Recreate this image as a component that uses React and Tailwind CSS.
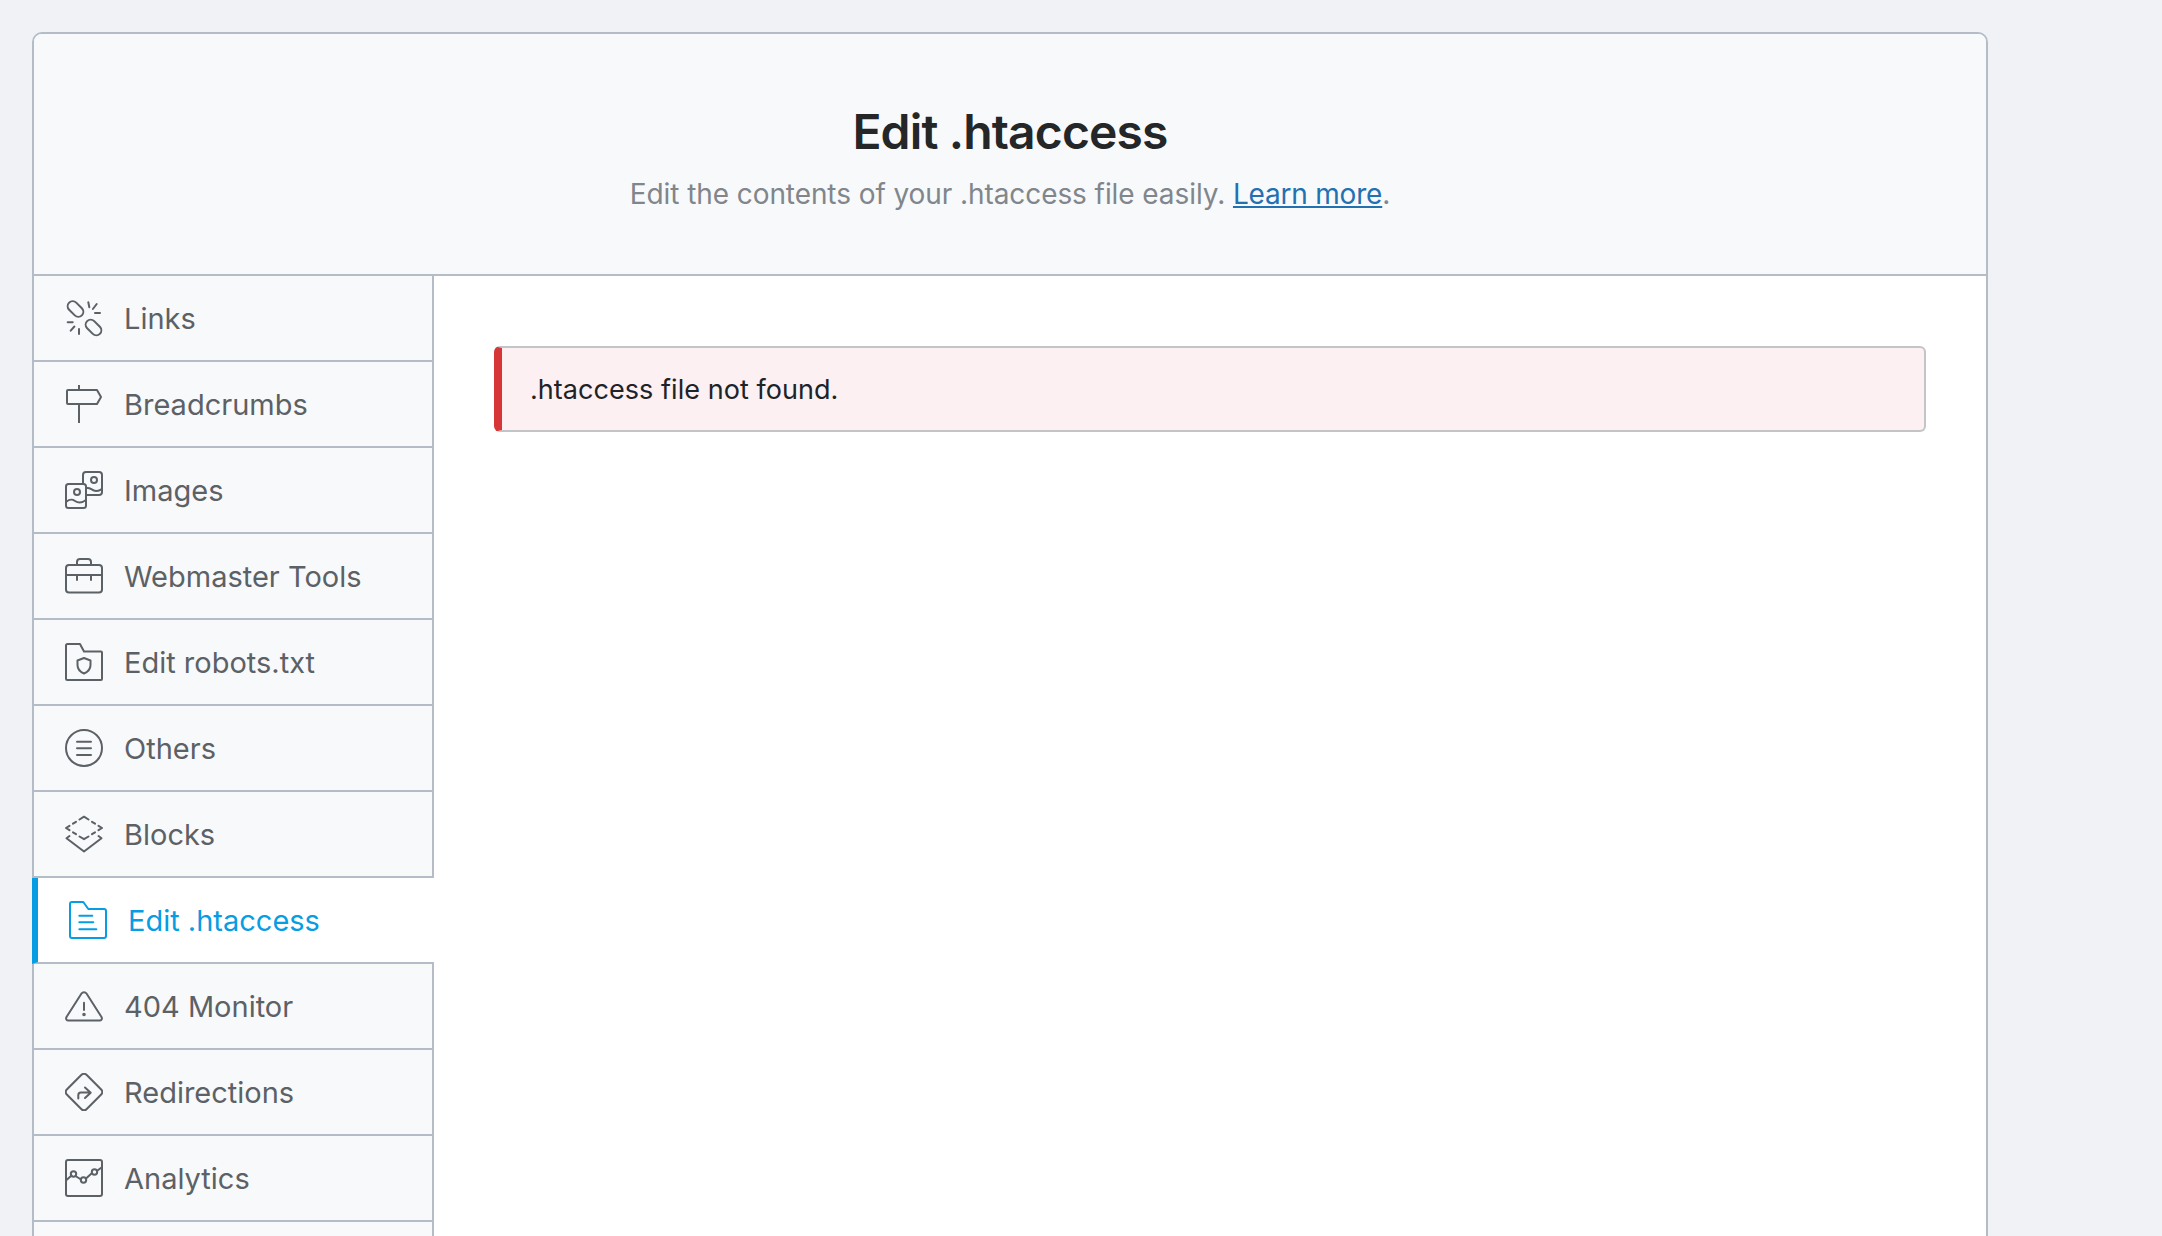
const Links = () => (
    <>
        <rect x="1.500" y="5" width="18" height="10" rx="5" transform="rotate(45 10.5 10)" />
        <rect x="19.500" y="23.500" width="18" height="10" rx="5" transform="rotate(45 28.5 28.5)" />
        <path d="M23.300 3.300l1 5M31.700 5l-3.800 5M35 14h-5" />
        <path d="M2.700 23.300h5M5.700 31.700l3.700-4.200M14 35v-5" />
    </>
);

const Breadcrumbs = () => (
    <>
        <path d="M14 0v5M14 19v19" />
        <path d="M3 5h29l4 7-4 7H3a1 1 0 0 1-1-1V6a1 1 0 0 1 1-1z" />
    </>
);

const Images = () => (
    <>
        <path d="M21 24h13a3 3 0 0 0 3-3V4a3 3 0 0 0-3-3H21a3 3 0 0 0-3 3v8" />
        <circle cx="29" cy="9" r="3" />
        <path d="M22 17c3-1 5 3 9 3 3 0 4-1 6-2" />
        <rect x="1" y="13" width="20" height="24" rx="2.500" />
        <circle cx="12" cy="21" r="3" />
        <path d="M1 31c4-3 6-3 9-1s7 2 11-1" />
    </>
);

const Webmaster = () => (
    <>
        <rect x="1" y="8" width="36" height="27.500" rx="3" />
        <path d="M1 18h36M12 8V5a3 3 0 0 1 3-3h8a3 3 0 0 1 3 3v3M12 18v5M26 18v5" />
    </>
);

const Robots = () => (
    <>
        <path d="M1 2.500a1.500 1.500 0 0 1 1.500-1.500H15l4 7.500h17a1 1 0 0 1 1 1V36a1 1 0 0 1-1 1H2.500A1.500 1.500 0 0 1 1 35.500z" />
        <path d="M19 15l6.500 2.500v4.500c0 4-3 7-6.500 8.500-3.500-1.500-6.500-4.500-6.500-8.500v-4.500z" />
    </>
);

const Others = () => (
    <>
        <circle cx="19" cy="19" r="18" />
        <path d="M12 12.700h14M12 19.300h14M12 26h14" />
    </>
);

const Blocks = () => (
    <>
        <path d="M14.500 4.500L19 1.700l4.500 2.800M27 6.800l3 1.900M33.500 10.800L37 13l-3.500 2.200M30 17.300l-3 1.900M23.500 21.500L19 24.200l-4.500-2.700M11 19.200l-3-1.900M4.500 15.200L1 13l3.500-2.200M8 8.700l3-1.900" />
        <path d="M4.500 21l-3 2.300L19 36.500l17.500-13.200-3-2.300" />
    </>
);

const Htaccess = () => (
    <>
        <path d="M1 3a2 2 0 0 1 2-2h11.300l5 7H35a2 2 0 0 1 2 2v25a2 2 0 0 1-2 2H3a2 2 0 0 1-2-2z" />
        <path d="M10.300 14.700h13M10.300 21.300h14M10.300 28.300h17" />
    </>
);

const Warning = () => (
    <>
        <path d="M16.500 6.500a3 3 0 0 1 5 0l15 23.500c1 1.700 0 3.500-2 3.500H3.500c-2 0-3-1.800-2-3.500z" />
        <path d="M19 15.700v7.300" />
        <circle cx="19" cy="27.500" r="0.800" />
    </>
);

const Redirect = () => (
    <>
        <path d="M16.500 1.800a3.500 3.500 0 0 1 5 0l14.700 14.700a3.500 3.500 0 0 1 0 5L21.500 36.200a3.500 3.500 0 0 1-5 0L1.800 21.500a3.500 3.500 0 0 1 0-5z" />
        <path d="M13.300 25.500V22a2.500 2.500 0 0 1 2.500-2.500H25.500M20 14.500l5.700 5.200-5.700 5.300" />
    </>
);

const Analytics = () => (
    <>
        <rect x="1" y="1" width="36" height="36" rx="2" />
        <path d="M1.500 21l5-4.500M10.500 17l5.500 3.500M21 19.500l5.500-5M32.500 11.500l4-3" />
        <circle cx="8.500" cy="15" r="2.700" />
        <circle cx="18.500" cy="21" r="2.700" />
        <circle cx="29.500" cy="13" r="2.700" />
    </>
);

const navItems = [
    { label: 'Links', Icon: Links },
    { label: 'Breadcrumbs', Icon: Breadcrumbs },
    { label: 'Images', Icon: Images },
    { label: 'Webmaster Tools', Icon: Webmaster },
    { label: 'Edit robots.txt', Icon: Robots },
    { label: 'Others', Icon: Others },
    { label: 'Blocks', Icon: Blocks },
    { label: 'Edit .htaccess', Icon: Htaccess, active: true },
    { label: '404 Monitor', Icon: Warning },
    { label: 'Redirections', Icon: Redirect },
    { label: 'Analytics', Icon: Analytics },
];

const NavIcon = ({ Icon }) => (
    <svg width="38" height="38" viewBox="0 0 38 38" fill="none" stroke="currentColor" strokeWidth="2" strokeLinecap="round" strokeLinejoin="round" className="shrink-0">
        <Icon />
    </svg>
);

const NavRow = ({ label, Icon, active }) => {
    if (active) {
        return (
            <div className="flex items-center gap-[21px] h-[86px] pl-[31px] -ml-[2px] w-[402px] relative z-10 bg-white border-l-[6px] border-l-[#069de3] border-b-2 border-b-[#b4bcc8] text-[#069de3]">
                <NavIcon Icon={Icon} />
                <span className="text-[29px] leading-none whitespace-nowrap">{label}</span>
            </div>
        );
    }
    return (
        <div className="flex items-center gap-[21px] h-[86px] pl-[31px] border-b-2 border-[#b4bcc8] text-[#5c6166]">
            <NavIcon Icon={Icon} />
            <span className="text-[29px] leading-none whitespace-nowrap">{label}</span>
        </div>
    );
};

const App = () => {
    return (
        <div className="h-[1236px] overflow-hidden bg-[#f0f2f5] pt-[32px] pl-[32px] font-['Inter',sans-serif]">
            <div className="w-[1956px] h-[1400px] bg-white border-2 border-[#b4bcc8] rounded-[10px]">
                <div className="h-[242px] border-b-2 border-[#b4bcc8] bg-[#f8f9fb] rounded-t-[8px] pt-[68px] text-center">
                    <h1 className="text-[48px] leading-[60px] font-semibold tracking-[-0.85px] text-[#242628]">Edit .htaccess</h1>
                    <p className="mt-[15px] text-[28px] leading-[34px] tracking-[-0.08px] text-[#80868b]">
                        Edit the contents of your .htaccess file easily. <a className="text-[#2271b1] underline tracking-[-0.2px]">Learn more</a>.
                    </p>
                </div>
                <div className="flex h-[1154px]">
                    <div className="w-[400px] shrink-0 bg-[#f8f9fb] border-r-2 border-[#b4bcc8]">
                        {navItems.map((item) => (
                            <NavRow key={item.label} {...item} />
                        ))}
                    </div>
                    <div className="flex-1 pt-[70px] px-[60px]">
                        <div className="h-[86px] flex items-center pl-[28px] pt-[2px] bg-[#fcf0f2] border-2 border-[#c3c4c7] border-l-[8px] border-l-[#d63638] rounded-[6px] text-[27px] tracking-[0.05px] text-[#1d2327]">
                            .htaccess file not found.
                        </div>
                    </div>
                </div>
            </div>
        </div>
    );
};

export default App;
